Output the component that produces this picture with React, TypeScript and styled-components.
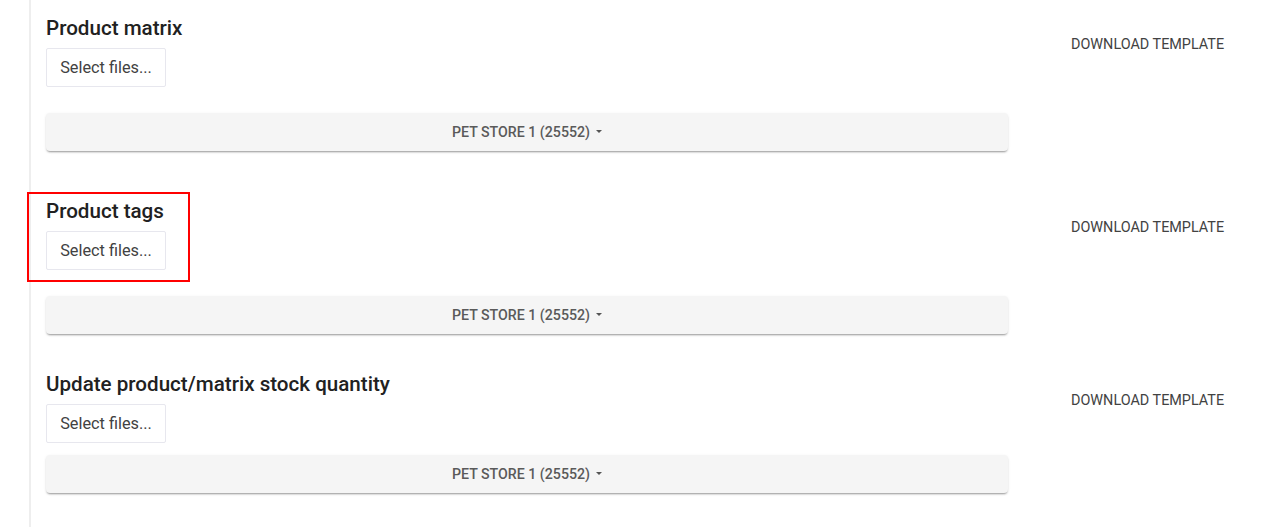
import { FC } from 'react'
import styled, { createGlobalStyle } from 'styled-components'

const GlobalStyle = createGlobalStyle`
  body {
    margin: 0;
    background: #fff;
    font-family: Roboto, "Liberation Sans", sans-serif;
  }
`

type Upload = {
  title: string
  store: string
  gap: number
  top: number
  marked?: boolean
}

const uploads: Upload[] = [
  { title: 'Product matrix', store: 'Pet Store 1 (25552)', gap: 26, top: 16 },
  { title: 'Product tags', store: 'Pet Store 1 (25552)', gap: 26, top: 48, marked: true },
  { title: 'Update product/matrix stock quantity', store: 'Pet Store 1 (25552)', gap: 12, top: 38 },
]

const App: FC = () => {
  return (
    <Page>
      <GlobalStyle />
      <Panel>
        {uploads.map((u) => (
          <Section key={u.title} $top={u.top}>
            <Main>
              <Highlight $marked={!!u.marked}>
                <Title>{u.title}</Title>
                <SelectButton>Select files...</SelectButton>
              </Highlight>
              <StoreDropdown $gap={u.gap}>
                {u.store}
                <Caret />
              </StoreDropdown>
            </Main>
            <Side>
              <DownloadLink>Download template</DownloadLink>
            </Side>
          </Section>
        ))}
      </Panel>
    </Page>
  )
}

const Page = styled.div`
  padding-left: 29px;
  height: 527px;
  box-sizing: border-box;
  overflow: hidden;
`

const Panel = styled.div`
  border-left: 2px solid #eeeeee;
  padding-left: 15px;
  height: 527px;
  box-sizing: border-box;
`

const Section = styled.div<{ $top: number }>`
  display: grid;
  grid-template-columns: 962px 1fr;
  padding-top: ${(p) => p.$top}px;
`

const Main = styled.div`
  display: flex;
  flex-direction: column;
  align-items: flex-start;
`

const Highlight = styled.div<{ $marked: boolean }>`
  position: relative;
  display: flex;
  flex-direction: column;
  align-items: flex-start;
  gap: 8px;

  &::after {
    content: '';
    display: ${(p) => (p.$marked ? 'block' : 'none')};
    position: absolute;
    left: -19px;
    top: -7px;
    width: 159px;
    height: 86px;
    border: 2px solid #ff0000;
  }
`

const Title = styled.h3`
  margin: 0;
  font-size: 20.6px;
  line-height: 24px;
  font-weight: 500;
  color: #212121;
`

const SelectButton = styled.button`
  height: 39px;
  width: 120px;
  padding: 0 8px;
  background: #fff;
  border: 1px solid #e7e7ee;
  border-radius: 2px;
  font-family: Roboto, "Liberation Sans", sans-serif;
  font-size: 16.3px;
  color: #424242;
  text-align: center;
`

const StoreDropdown = styled.div<{ $gap: number }>`
  margin-top: ${(p) => p.$gap}px;
  align-self: stretch;
  height: 38px;
  display: flex;
  align-items: center;
  justify-content: center;
  gap: 6px;
  background: #f5f5f5;
  border-radius: 4px;
  box-shadow: 0 2px 2px -1px rgba(0, 0, 0, 0.35), 0 1px 3px rgba(0, 0, 0, 0.1);
  font-size: 14.2px;
  font-weight: 500;
  color: #5a5a5a;
  text-transform: uppercase;
`

const Caret = styled.span`
  width: 0;
  height: 0;
  border-left: 3px solid transparent;
  border-right: 3px solid transparent;
  border-top: 3px solid #555;
  margin-bottom: 2px;
`

const Side = styled.div`
  padding-top: 19px;
  padding-left: 63px;
`

const DownloadLink = styled.a`
  display: block;
  font-size: 14.4px;
  line-height: 20px;
  color: #424242;
  text-transform: uppercase;
  cursor: pointer;
`

export default App
